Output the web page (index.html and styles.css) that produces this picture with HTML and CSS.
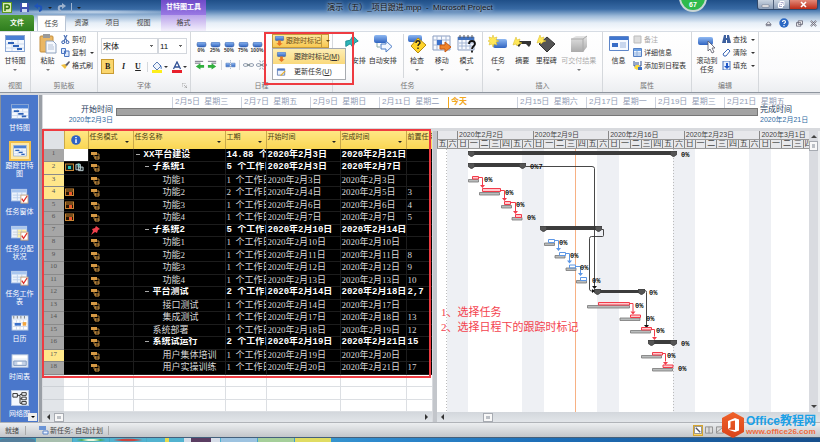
FILE: index.html
```html
<!DOCTYPE html>
<html lang="zh-CN">
<head>
<meta charset="utf-8">
<title>演示（五）_项目跟进.mpp - Microsoft Project</title>
<link rel="stylesheet" href="styles.css">
</head>
<body>
<svg class="defs" aria-hidden="true">
  <defs>
    <linearGradient id="blue" x1="0" y1="0" x2="0" y2="1"><stop offset="0" stop-color="#8fb9f2"/><stop offset="1" stop-color="#2f63c0"/></linearGradient>
    <linearGradient id="grey" x1="0" y1="0" x2="0" y2="1"><stop offset="0" stop-color="#e4e4e4"/><stop offset="1" stop-color="#aaa"/></linearGradient>
    <linearGradient id="orange" x1="0" y1="0" x2="0" y2="1"><stop offset="0" stop-color="#f0622a"/><stop offset="1" stop-color="#d8431a"/></linearGradient>
    <symbol id="i-gantt" viewBox="0 0 20 18"><rect x=".5" y=".5" width="19" height="16" fill="#f4f8fe" stroke="#8aa6d2"/><rect x="1" y="1" width="18" height="4" fill="#4a7fd4"/><path d="M1 9h18M1 13h18M7 5v11M13 5v11" stroke="#c9d8ee" fill="none"/><path d="M3 7h6v2H3zM8 10h6v2H8zM12 13h5v2h-5z" fill="#2d62b8"/></symbol>
    <symbol id="i-form" viewBox="0 0 20 18"><rect x=".5" y="1.500" width="17" height="13" fill="#edf3fc" stroke="#b7cbea"/><path d="M1 2h16v3H1z" fill="#a9c6ef"/><path d="M2 8h14M2 11h14M7 5v9M12 5v9" stroke="#b9cdea"/><rect x="11" y="8" width="8" height="9" fill="#fff" stroke="#c9a27b"/><path d="M12 12l2 3 4-6" fill="none" stroke="#e0342a" stroke-width="1.500"/></symbol>
    <symbol id="i-usage" viewBox="0 0 20 18"><rect x=".5" y="1.500" width="17" height="13" fill="#edf3fc" stroke="#b7cbea"/><path d="M7 5h10v9H7z" fill="#fff3a6"/><path d="M1 2h16v3H1z" fill="#a9c6ef"/><path d="M2 8h14M2 11h14M7 5v9M12 5v9" stroke="#c5cfd8"/><rect x="11" y="8" width="8" height="9" fill="#fff" stroke="#c9a27b"/><path d="M12 12l2 3 4-6" fill="none" stroke="#e0342a" stroke-width="1.500"/></symbol>
    <symbol id="i-cal" viewBox="0 0 20 18"><rect x="1" y="1" width="18" height="16" fill="#fff" stroke="#a9bedd"/><path d="M1 2h18v4H1z" fill="#e4ebf6"/><path d="M3 1v3M7 1v3M11 1v3M15 1v3" stroke="#777"/><path d="M2 9h16M2 13h16M6 6v11M10 6v11M14 6v11" stroke="#cdd8ea"/><path d="M4 9h7v3H4z" fill="#3a70ca"/><path d="M13 8h4v4h-4z" fill="#f4a640"/></symbol>
    <symbol id="i-time" viewBox="0 0 20 18"><rect x="1" y="2" width="18" height="14" fill="#edf2fa" stroke="#b4c5de"/><path d="M2 3h16v3H2z" fill="#fff"/><path d="M3 9h14v5H3z" fill="#c5d3e8" stroke="#7f98bd"/><path d="M7 10h5v3H7z" fill="#fff"/></symbol>
    <symbol id="i-net" viewBox="0 0 20 18"><rect x=".5" y=".5" width="19" height="17" fill="#f3f7fd" stroke="#b9cbe8"/><path d="M2 4h5v4H2zM12 3h5v3h-5zM12 8h5v3h-5zM12 13h5v3h-5zM7 6h3v9h2M10 5h2M10 10h2" fill="none" stroke="#222"/></symbol>
    <symbol id="i-auto" viewBox="0 0 9 9"><path d="M0 1h6v3H0z" fill="#d79a45"/><path d="M3 4v2h2M6 3h2v3" stroke="#a87733" fill="none"/><path d="M4 6h4v2H4z" fill="none" stroke="#d79a45"/></symbol>
    <symbol id="i-pin" viewBox="0 0 9 9"><path d="M5 0l4 3-2 1-1 3-2-1-4 3 2-4-1-2 3-1z" fill="#f0404c"/></symbol>
    <symbol id="i-date" viewBox="0 0 9 9"><rect x=".5" y="1" width="8" height="6.500" fill="#241505" stroke="#c98635"/><path d="M1 3h7" stroke="#c98635"/><path d="M4 4h3v3H4z" fill="#f0562a"/></symbol>
    <symbol id="i-date2" viewBox="0 0 9 9"><rect x=".5" y="1" width="8" height="6.500" fill="#10241f" stroke="#c98635"/><path d="M3 3h3v3H3z" fill="#27c5bb"/></symbol>
    <symbol id="i-note" viewBox="0 0 10 9"><path d="M1 1h5v6H1zM4 4h5v4H4z" fill="#263238" stroke="#c8dadd"/><path d="M3 0h2v4H3z" fill="#7ed0cd"/></symbol>
    <symbol id="i-pill" viewBox="0 0 11 11"><rect x="1" y="0" width="9" height="5" rx="2" fill="url(#blue)" stroke="#2a5299" stroke-width=".5"/></symbol>
    <symbol id="i-track" viewBox="0 0 11 11"><rect x="1" y="0" width="9" height="5" rx="1" fill="url(#blue)" stroke="#2a5299" stroke-width=".5"/><path d="M4 5h3v3h2l-3.500 3L2 8h2z" fill="#e87722"/></symbol>
    <symbol id="i-summary" viewBox="0 0 8 7"><path d="M0 0h8v4L4 7 0 4z" fill="#555" stroke="#222" stroke-width=".6"/></symbol>
    <symbol id="i-chain" viewBox="0 0 12 10"><rect x="0.500" y="3.500" width="5" height="3" rx="1.500" fill="none" stroke="#8996aa"/><rect x="6.500" y="3.500" width="5" height="3" rx="1.500" fill="none" stroke="#8996aa"/><path d="M4 5h4" stroke="#566"/></symbol>
  </defs>
</svg>

<div class="app">
  <header class="head">
    <div class="titlebar">
      <div class="title-left">
        <div class="quick">
          <svg class="logo" viewBox="0 0 10 11"><rect x=".5" y=".5" width="9" height="10" fill="#d9edb4" stroke="#5d9a1f"/><path d="M3 9V3h2.500a1.800 1.800 0 0 1 0 3.600H3" fill="none" stroke="#34750f" stroke-width="1.500"/></svg>
          <button aria-label="保存"><svg viewBox="0 0 9 9"><path d="M0 0h9v9H0z" fill="#3f51b0"/><path d="M2 0h5v4H2z" fill="#fff"/><path d="M2 6h5v3H2z" fill="#ccd6f2"/></svg></button>
          <button aria-label="撤消"><svg viewBox="0 0 9 9"><path d="M2 3h3c3 0 3 4 0 5" fill="none" stroke="#1f54b8" stroke-width="2"/><path d="M0 3l4-3v6z" fill="#1f54b8"/></svg></button>
          <i class="caret"></i>
          <button class="dim" aria-label="恢复"><svg viewBox="0 0 9 9"><path d="M7 3H4C1 3 1 7 4 8" fill="none" stroke="#9db2cd" stroke-width="2"/><path d="M9 3L5 0v6z" fill="#9db2cd"/></svg></button>
          <i class="bar"></i><i class="caret"></i>
        </div>
        <div class="context-title">甘特图工具</div>
      </div>
      <h1>演示（五）_项目跟进.mpp&nbsp; - &nbsp;Microsoft Project</h1>
      <div class="title-right">
        <span class="badge">67</span>
        <div class="win"><button aria-label="最小化"><svg viewBox="0 0 9 7"><path d="M1 4h7v2H1z" fill="#fff" stroke="#667" stroke-width=".5"/></svg></button><button aria-label="还原"><svg viewBox="0 0 9 7"><path d="M3 .5h4v4H3zM1.500 2.500h4v4h-4z" fill="#aac" stroke="#fff"/></svg></button><button class="close" aria-label="关闭"><svg viewBox="0 0 9 7"><path d="M2 1l5 5M7 1L2 6" stroke="#fff" stroke-width="1.600"/></svg></button></div>
      </div>
    </div>
    <nav class="tabs">
      <button class="file">文件</button><button class="tab on">任务</button><button class="tab">资源</button><button class="tab">项目</button><button class="tab">视图</button><button class="tab ctx">格式</button>
      <div class="tabtools">
        <svg viewBox="0 0 8 8"><path d="M1 5l3-3 3 3zM1 6.500h6" fill="#fff" stroke="#667"/></svg>
        <svg class="help" viewBox="0 0 10 10"><circle cx="5" cy="5" r="4.700" fill="#2a68c4"/><path d="M3.500 4c0-2 3-2 3 0 0 1-1.500 1-1.500 2M5 7v1.200" fill="none" stroke="#fff" stroke-width="1.200"/></svg>
        <svg viewBox="0 0 8 8"><path d="M2.500 1h5v4h-5zM.5 3h5v4h-5z" fill="#fff" stroke="#667"/></svg>
        <svg viewBox="0 0 8 8"><path d="M1 1l6 6M7 1L1 7" stroke="#667" stroke-width="2"/><path d="M1 1l6 6M7 1L1 7" stroke="#fff" stroke-width=".7"/></svg>
      </div>
    </nav>
  </header>

  <section class="ribbon">
    <div class="group g-view">
      <div class="body"><button class="big"><svg viewBox="0 0 20 18"><use href="#i-gantt"/></svg><span>甘特图</span><i class="caret"></i></button></div>
      <div class="name">视图</div>
    </div>
    <div class="group g-clip">
      <div class="body">
        <button class="big"><svg viewBox="0 0 18 20"><rect x="1" y="2" width="13" height="16" rx="1" fill="#eab765" stroke="#c58f3c"/><path d="M4 0h7v4H4z" fill="#9a9a9a"/><path d="M7 7h7l3 3v9H7z" fill="#f6f9fe" stroke="#8fa3c0"/><path d="M9 11h5M9 13h6M9 15h6" stroke="#b2c0d6"/></svg><span>粘贴</span><i class="caret"></i></button>
        <div class="stack">
          <button><svg viewBox="0 0 9 9"><path d="M3 0l3 6M6 0L3 6" stroke="#4b6fb4" stroke-width="1.200"/><circle cx="2.200" cy="7.200" r="1.400" fill="none" stroke="#2a56a8"/><circle cx="6.500" cy="7.200" r="1.400" fill="none" stroke="#2a56a8"/></svg>剪切</button>
          <button><svg viewBox="0 0 9 9"><path d="M.5.5h4v5h-4zM3.500 3h4.500v5.500H3.500z" fill="#dfeafb" stroke="#4a74c0"/></svg>复制<i class="caret"></i></button>
          <button><svg viewBox="0 0 9 9"><path d="M0 4l4 4 2-3-2-2z" fill="#f0c040"/><path d="M4 4l4-4 1 1-3 4z" fill="#5a5a6a"/></svg>格式刷</button>
        </div>
      </div>
      <div class="name">剪贴板</div>
    </div>
    <div class="group g-font">
      <div class="body col">
        <div class="row"><select class="fontname" aria-label="字体"><option>宋体</option></select><select class="fontsize" aria-label="字号"><option>11</option></select></div>
        <div class="row fmt"><button class="b on">B</button><button class="i">I</button><button class="u">U</button><i class="vr"></i>
          <button aria-label="填充颜色"><svg viewBox="0 0 10 12"><path d="M1 5l4-4 4 4-4 4z" fill="#eef4fd" stroke="#5b7db5"/><path d="M8 4c2 2 1 4 1 4" stroke="#3a6cc0" fill="none"/><path d="M0 9h10v3H0z" fill="#fdee1c"/></svg></button><i class="caret"></i>
          <button aria-label="字体颜色"><svg viewBox="0 0 10 12"><path d="M1.500 8L5 1l3.500 7M3 6h4" fill="none" stroke="#2f4f94" stroke-width="1.300"/><path d="M0 9h10v3H0z" fill="#e8202c"/></svg></button><i class="caret"></i></div>
      </div>
      <div class="name">字体</div><svg class="launch" viewBox="0 0 5 5"><path d="M0 4V0h4M2 2l3 3M5 2v3H2" fill="none" stroke="#999" stroke-width=".7"/></svg>
    </div>
    <div class="group g-sched">
      <div class="body">
        <div class="col sched">
          <div class="row pct">
            <button><svg><use href="#i-pill"/></svg>0%</button><button><svg><use href="#i-pill"/></svg>25%</button><button><svg><use href="#i-pill"/></svg>50%</button><button><svg><use href="#i-pill"/></svg>75%</button><button><svg><use href="#i-pill"/></svg>100%</button>
          </div>
          <div class="row links">
            <button aria-label="升级"><svg viewBox="0 0 12 10"><path d="M1 1h9M1 3h6" stroke="#667"/><path d="M11 5v3H7v2L2 6.500 7 3v2z" fill="#2fae3c"/></svg></button>
            <button aria-label="降级"><svg viewBox="0 0 12 10"><path d="M1 1h9M5 3h5" stroke="#667"/><path d="M1 5v3h4v2l5-3.500L5 3v2z" fill="#2fae3c"/></svg></button>
            <i class="vr"></i>
            <button aria-label="拆分任务"><svg viewBox="0 0 12 10"><path d="M1 3h4v4H1zM7 3h4v4H7z" fill="url(#blue)" stroke="#4776bd" stroke-width=".6"/><path d="M6 0v10" stroke="#7d93b3" stroke-dasharray="1 1"/></svg></button>
            <i class="vr"></i>
            <button aria-label="链接任务"><svg viewBox="0 0 12 10"><use href="#i-chain"/></svg></button>
            <button aria-label="取消链接"><svg viewBox="0 0 12 10"><use href="#i-chain"/><path d="M4 0l1 2M8 0L7 2M4 10l1-2M8 10L7 8" stroke="#8996aa"/></svg></button>
          </div>
        </div>
        <div class="drop">
          <button class="mark"><svg><use href="#i-track"/></svg><span>跟踪时标记</span><i class="caret"></i></button>
          <div class="menu">
            <button class="hot"><svg><use href="#i-track"/></svg>跟踪时标记(<u>M</u>)</button>
            <button><svg viewBox="0 0 11 11"><path d="M1 2h8v7H1z" fill="#eef3fb" stroke="#6a86b8"/><path d="M1 2h8v2H1z" fill="#4a78c6"/><path d="M4 9l5-5 1 1-5 5z" fill="#e8b02c"/></svg>更新任务(<u>U</u>)</button>
          </div>
          <div class="frame"></div>
        </div>
      </div>
      <div class="name">日程</div>
    </div>
    <div class="group g-task">
      <div class="body">
        <button class="big manual"><svg viewBox="0 0 16 18"><path d="M1 8l5-1 3-5 6 6-4 2-2 5-3-4-5 3z" fill="#2cb5b8" stroke="#188a90"/></svg><span>安排</span></button>
        <button class="big w34"><svg viewBox="0 0 20 18"><rect x="1" y="0" width="13" height="8" rx="2" fill="url(#blue)"/><path d="M4 8v4h3" fill="none" stroke="#8aa"/><path d="M8 9h5V6l6 5.500-6 5.500v-3H8z" fill="#f1f6ff" stroke="#4b7cc6"/></svg><span>自动安排</span></button>
        <i class="vr tall"></i>
        <button class="big w25"><svg viewBox="0 0 20 18"><rect x="1" y="0" width="14" height="7" rx="2" fill="url(#blue)"/><path d="M11 3l8 7-8 8-7-7z" fill="#ffd42a" stroke="#b58a10"/><path d="M9 8c0-3 4-3 4 0 0 1-2 1-2 3M11 12.500v1.500" fill="none" stroke="#222" stroke-width="1.400"/></svg><span>检查</span><i class="caret"></i></button>
        <button class="big w25"><svg viewBox="0 0 20 18"><path d="M1 1h17v14H1z" fill="#f8faff" stroke="#8a9dc0"/><path d="M1 5h17M1 10h17M5 1v14M9.500 1v14M14 1v14" stroke="#a5b6d4"/><path d="M5 5h5v5H5z" fill="#3b71cb"/><path d="M8 10h5V7l6 5-6 5v-3H8z" fill="#f0832a" stroke="#c95b12"/></svg><span>移动</span><i class="caret"></i></button>
        <button class="big w25"><svg viewBox="0 0 20 18"><path d="M1 2h16v13H1z" fill="#f8faff" stroke="#8a9dc0"/><path d="M1 2h16v3H1z" fill="#4273c0"/><path d="M3 0v3M7 0v3M11 0v3M15 0v3" stroke="#555"/><path d="M2 8h14M2 11h14M5 5v9M9 5v9M13 5v9" stroke="#a5b6d4"/><path d="M12 9c0-4 6-4 6 0 0 2-3 2-3 5M15 15.500v2" fill="none" stroke="#111" stroke-width="1.800"/></svg><span>模式</span><i class="caret"></i></button>
      </div>
      <div class="name">任务</div>
    </div>
    <div class="group g-ins">
      <div class="body">
        <button class="big w25"><svg viewBox="0 0 20 18"><rect x="5" y="4" width="14" height="9" rx="2" fill="url(#blue)"/><path d="M5 0l1 3 3-1-1 3 3 1-3 1 1 3-3-1-1 3-1-3-3 1 1-3-2-1 2-1-1-3 3 1z" fill="#ffe85a" stroke="#d8b820" stroke-width=".5"/></svg><span>任务</span><i class="caret"></i></button>
        <button class="big w25"><svg viewBox="0 0 20 18"><path d="M4 6h15v3l-2 3-3-3H9l-2 3-3-3z" fill="#333"/><path d="M4 2l1 3 3-1-1 3 3 1-3 1-2 2-1-2-3 1 1-3z" fill="#ffe85a" stroke="#d8b820" stroke-width=".5"/></svg><span>摘要</span></button>
        <button class="big w25"><svg viewBox="0 0 20 18"><path d="M11 2l8 7-8 8-8-8z" fill="#555" stroke="#333"/><path d="M4 0l1 3 3-1-1 3 3 1-3 1-2 2-1-2-3 1 1-3z" fill="#ffe85a" stroke="#d8b820" stroke-width=".5"/></svg><span>里程碑</span></button>
        <button class="big w42 off" disabled><svg viewBox="0 0 20 18"><path d="M2 4l5-3h11v11l-4 5H2z" fill="url(#grey)"/><path d="M2 4h12v13M14 4l4-3" fill="none" stroke="#aaa"/></svg><span>可交付结果</span><i class="caret"></i></button>
      </div>
      <div class="name">插入</div>
    </div>
    <div class="group g-prop">
      <div class="body">
        <button class="big w25"><svg viewBox="0 0 20 18"><path d="M.5 1.500h19v14H.5z" fill="#f5f9ff" stroke="#5e86c9"/><path d="M1 2h18v3H1z" fill="#4076cf"/><path d="M3 8h6v4H3z" fill="#356bc6"/><path d="M11 8h6M11 10h6M11 12h6" stroke="#9ab3dc"/></svg><span>信息</span></button>
        <div class="stack">
          <button class="off" disabled><svg viewBox="0 0 9 9"><path d="M1 1h7v7H1z" fill="#ddd" stroke="#bbb"/></svg>备注</button>
          <button><svg viewBox="0 0 9 9"><path d="M.5.5h8v8h-8z" fill="#eef5ff" stroke="#5580c4"/><path d="M1 1h7v2H1z" fill="#6ea2e4"/><path d="M1 5h7M1 7h7M4 3v5" stroke="#8fb0de"/></svg>详细信息</button>
          <button><svg viewBox="0 0 9 9"><path d="M1 0v5h7V0M3 1v3M5 1v3" stroke="#2b4f92" fill="none"/><path d="M3 4l3 0 1 3-3 2-3-2z" fill="#fbd93b"/><path d="M5 6h4v3H5z" fill="#3a6fc9"/></svg>添加到日程表</button>
        </div>
      </div>
      <div class="name">属性</div>
    </div>
    <div class="group g-edit">
      <div class="body">
        <button class="big w25"><svg viewBox="0 0 20 18"><rect x="1" y="2" width="15" height="8" rx="2" fill="url(#blue)"/><path d="M11 6v10l2-2 2 4 2-1-2-4h3z" fill="#fff" stroke="#556" stroke-width=".8"/></svg><span>滚动到<br>任务</span></button>
        <div class="stack">
          <button><svg viewBox="0 0 9 9"><path d="M1 4l1-4h2v8H0zM5 0h2l2 8H5zM4 3h1v2H4z" fill="#3c5f9e"/></svg>查找<i class="caret"></i></button>
          <button><svg viewBox="0 0 9 9"><path d="M1 6l5-5 2 2-4 5H2z" fill="#fff" stroke="#3a65b5"/></svg>清除<i class="caret"></i></button>
          <button><svg viewBox="0 0 9 9"><path d="M1 0h7v9H1z" fill="#e8f0fd" stroke="#4a74bd"/><path d="M4 2h2v3h2L5 8 2 5h2z" fill="#2058c8"/></svg>填充<i class="caret"></i></button>
        </div>
      </div>
      <div class="name">编辑</div>
    </div>
  </section>

  <main class="main">
    <aside class="views">
      <button><svg><use href="#i-gantt"/></svg>甘特图</button>
      <button class="on"><svg><use href="#i-gantt"/></svg>跟踪甘特图</button>
      <button><svg><use href="#i-form"/></svg>任务窗体</button>
      <button><svg><use href="#i-usage"/></svg>任务分配状况</button>
      <button><svg><use href="#i-form"/></svg>任务工作表</button>
      <button><svg><use href="#i-cal"/></svg>日历</button>
      <button><svg><use href="#i-time"/></svg>时间表</button>
      <button><svg><use href="#i-net"/></svg>网络图</button>
      <span class="more"><i class="caret"></i></span>
    </aside>

    <div class="work">
      <section class="timeline">
        <div class="edge start"><b>开始时间</b><span>2020年2月3日</span></div>
        <div class="span">
          <div class="dates"><span>2月5日&nbsp; 星期三</span><span>2月7日&nbsp; 星期五</span><span>2月9日&nbsp; 星期日</span><span>2月11日&nbsp; 星期二</span><span class="today">今天</span><span>2月15日&nbsp; 星期六</span><span>2月17日&nbsp; 星期一</span><span>2月19日&nbsp; 星期三</span><span>2月21日&nbsp; 星期五</span></div>
          <div class="track"></div>
        </div>
        <div class="edge"><b>完成时间</b><span>2020年2月21日</span></div>
      </section>

      <div class="split">
        <section class="sheet">
          <div class="grid">
          <table>
            <colgroup><col class="c-id"><col class="c-info"><col class="c-mode"><col class="c-name"><col class="c-dur"><col class="c-start"><col class="c-end"><col class="c-pred"></colgroup>
            <thead><tr><th></th><th class="info"><svg viewBox="0 0 10 10"><circle cx="5" cy="5" r="4.800" fill="#2f62c4"/><path d="M5 2v1.300M5 4.300V8" stroke="#fff" stroke-width="1.500"/></svg></th><th>任务模式<i class="caret"></i></th><th>任务名称<i class="caret"></i></th><th>工期<i class="caret"></i></th><th>开始时间<i class="caret"></i></th><th>完成时间<i class="caret"></i></th><th>前置任务</th></tr></thead>
            <tbody>
              <tr class="sum"><th>1</th><td class="white"></td><td><svg><use href="#i-auto"/></svg></td><td class="l0">XX平台建设</td><td>14.88 个工作日</td><td>2020年2月3日</td><td>2020年2月21日</td><td></td></tr>
              <tr class="sum"><th class="sel">2</th><td class="marks"><svg><use href="#i-date2"/></svg><svg><use href="#i-note"/></svg></td><td><svg><use href="#i-auto"/></svg></td><td class="l1">子系统1</td><td>5 个工作日</td><td>2020年2月3日</td><td>2020年2月7日</td><td></td></tr>
              <tr><th class="sel">3</th><td></td><td><svg><use href="#i-auto"/></svg></td><td class="l2">功能1</td><td>1  个工作日</td><td>2020年2月3日</td><td>2020年2月3日</td><td></td></tr>
              <tr><th class="sel">4</th><td class="marks"><svg><use href="#i-date"/></svg></td><td><svg><use href="#i-auto"/></svg></td><td class="l2">功能2</td><td>2  个工作日</td><td>2020年2月4日</td><td>2020年2月5日</td><td>3</td></tr>
              <tr><th>5</th><td class="marks"><svg><use href="#i-date"/></svg></td><td><svg><use href="#i-auto"/></svg></td><td class="l2">功能3</td><td>1  个工作日</td><td>2020年2月6日</td><td>2020年2月6日</td><td>4</td></tr>
              <tr><th>6</th><td class="marks"><svg><use href="#i-date"/></svg></td><td><svg><use href="#i-auto"/></svg></td><td class="l2">功能4</td><td>1  个工作日</td><td>2020年2月7日</td><td>2020年2月7日</td><td>5</td></tr>
              <tr class="sum"><th>7</th><td></td><td><svg><use href="#i-pin"/></svg></td><td class="l1">子系统2</td><td>5 个工作日</td><td>2020年2月10日</td><td>2020年2月14日</td><td></td></tr>
              <tr><th>8</th><td></td><td><svg><use href="#i-auto"/></svg></td><td class="l2">功能1</td><td>1  个工作日</td><td>2020年2月10日</td><td>2020年2月10日</td><td></td></tr>
              <tr><th>9</th><td></td><td><svg><use href="#i-auto"/></svg></td><td class="l2">功能2</td><td>1  个工作日</td><td>2020年2月11日</td><td>2020年2月11日</td><td>8</td></tr>
              <tr><th>10</th><td></td><td><svg><use href="#i-auto"/></svg></td><td class="l2">功能3</td><td>1  个工作日</td><td>2020年2月12日</td><td>2020年2月12日</td><td>9</td></tr>
              <tr><th>11</th><td></td><td><svg><use href="#i-auto"/></svg></td><td class="l2">功能4</td><td>1  个工作日</td><td>2020年2月13日</td><td>2020年2月13日</td><td>10</td></tr>
              <tr class="sum"><th>12</th><td></td><td><svg><use href="#i-auto"/></svg></td><td class="l1">平台测试</td><td>2 个工作日</td><td>2020年2月14日</td><td>2020年2月18日</td><td>2,7</td></tr>
              <tr><th>13</th><td></td><td><svg><use href="#i-auto"/></svg></td><td class="l2">接口测试</td><td>1  个工作日</td><td>2020年2月14日</td><td>2020年2月17日</td><td></td></tr>
              <tr><th>14</th><td></td><td><svg><use href="#i-auto"/></svg></td><td class="l2">集成测试</td><td>1  个工作日</td><td>2020年2月17日</td><td>2020年2月18日</td><td>13</td></tr>
              <tr><th>15</th><td></td><td><svg><use href="#i-auto"/></svg></td><td class="l1 leaf">系统部署</td><td>1  个工作日</td><td>2020年2月18日</td><td>2020年2月19日</td><td>12</td></tr>
              <tr class="sum"><th>16</th><td></td><td><svg><use href="#i-auto"/></svg></td><td class="l1">系统试运行</td><td>2 个工作日</td><td>2020年2月19日</td><td>2020年2月21日</td><td>15</td></tr>
              <tr><th class="sel">17</th><td></td><td><svg><use href="#i-auto"/></svg></td><td class="l2">用户集体培训</td><td>1  个工作日</td><td>2020年2月19日</td><td>2020年2月20日</td><td></td></tr>
              <tr><th>18</th><td></td><td><svg><use href="#i-auto"/></svg></td><td class="l2">用户实操训练</td><td>1  个工作日</td><td>2020年2月20日</td><td>2020年2月21日</td><td>17</td></tr>
              <tr class="blank"><th></th><td></td><td></td><td></td><td></td><td></td><td></td><td></td></tr>
              <tr class="blank"><th></th><td></td><td></td><td></td><td></td><td></td><td></td><td></td></tr>
              <tr class="blank"><th></th><td></td><td></td><td></td><td></td><td></td><td></td><td></td></tr>
            </tbody>
          </table>
          </div>
          <div class="hscroll"><i class="left"></i><i class="thumb"></i><i class="right"></i></div>
          <div class="frame"></div>
        </section>

        <section class="chart">
          <div class="plot">
            <div class="canvas">
              <div class="scale">
                <div class="lead"><b></b><span>五</span><span>六</span></div>
                <div class="week"><b>2020年2月2日</b><span>日</span><span>一</span><span>二</span><span>三</span><span>四</span><span>五</span><span>六</span></div>
                <div class="week"><b>2020年2月9日</b><span>日</span><span>一</span><span>二</span><span>三</span><span>四</span><span>五</span><span>六</span></div>
                <div class="week"><b>2020年2月16日</b><span>日</span><span>一</span><span>二</span><span>三</span><span>四</span><span>五</span><span>六</span></div>
                <div class="week"><b>2020年2月23日</b><span>日</span><span>一</span><span>二</span><span>三</span><span>四</span><span>五</span><span>六</span></div>
                <div class="week"><b>2020年3月1日</b><span>日</span><span>一</span><span>二</span><span>三</span><span>四</span><span>五</span><span>六</span></div>
              </div>
              <svg class="bars" width="398" height="264" viewBox="437 149 398 264">
                <g fill="#eef0f4"><path d="M447 149h21v264h-21zM522 149h22v264h-22zM597 149h22v264h-22zM673 149h22v264h-22zM749 149h22v264h-22z"/></g>
                <path d="M446.500 149v264M673.500 149v264" stroke="#bbb" stroke-dasharray="1 2"/>
                <path d="M575 149h1v264h-1z" fill="#f7b184"/>
                <g fill="#3c3c3c"><path d="M470 151h204v4H470zM470 163h54v4h-54zM542 226h58v4h-58zM595 290h47v3h-47zM650 340h25v4h-25z"/></g>
                <g>
                  <use href="#i-summary" x="468" y="151" width="7" height="6"/><use href="#i-summary" x="670" y="151" width="7" height="6"/>
                  <use href="#i-summary" x="468" y="163" width="7" height="6"/><use href="#i-summary" x="519" y="163" width="7" height="6"/>
                  <use href="#i-summary" x="540" y="226" width="7" height="6"/><use href="#i-summary" x="595" y="226" width="7" height="6"/>
                  <use href="#i-summary" x="594" y="289" width="7" height="6"/><use href="#i-summary" x="638" y="289" width="7" height="6"/>
                  <use href="#i-summary" x="648" y="340" width="7" height="6"/><use href="#i-summary" x="670" y="340" width="7" height="6"/>
                </g>
                <path d="M526 166.500h66q2.500 0 2.500 2V288M602 229.500h1.500v6q0 1-1 1h-11q-2 0-2 2V289q0 2 2 2h2M645 290.500q1.500 0 1.500 2V325" fill="none" stroke="#333" stroke-width=".9"/>
                <path d="M592 286h5l-2.500 3zM592 289v4l3-2zM644 325h5l-2.500 3z" fill="#111"/>
                <g fill="#b9bcbc" stroke="#777" stroke-width=".8"><path d="M468.500 179.500h10v2.500h-10zM479.500 192.500h20v2.500h-20zM501.500 205.500h10v2.500h-10zM512 217.500h10v2.500h-10zM544.500 243h10v2.500h-10zM555 255.500h10v2.500h-10zM566 268h10v2.500h-10zM576.500 280.500h10v2.500h-10zM587.500 305.500h42v2.500h-42zM620 318h20v2.500h-20zM630.500 330.500h20v2.500h-20zM641.500 355.500h20v2.500h-20zM652.500 368.500h20v2.500h-20z"/></g>
                <g fill="#ffc9cd" stroke="#f23b4a"><path d="M472.500 176.500h6v2.500h-6zM482.500 188.500h18v3h-18zM504.500 201.500h6v3h-6zM515.500 214.500h6v3h-6zM598.500 302.500h31v2.500h-31zM630.500 315h10v2.500h-10zM641.500 327.500h10v2.500h-10zM652.500 352.500h10v2.500h-10zM663 365h10v2.500h-10z"/></g>
                <path d="M479 177.500h3.500v9M500 190.500h4.500v8M511 202.500h4.500v9M630 303.500h3v8M651 329.500h3.500v7M662 353.500h3.500v8" fill="none" stroke="#f23b4a"/>
                <path d="M480 185h5l-2.500 3zM502 198h5l-2.500 3zM513 211h5l-2.500 3zM630.500 311.500h5l-2.500 3zM652 337h5l-2.500 3zM663 362h5l-2.500 3z" fill="#f23b4a"/>
                <path d="M548.500 239.500h6v3h-6zM559.500 252.500h6v3h-6zM569.500 265h6v3h-6zM580.500 277.500h6v3h-6zM555 240.500h3.500v9M566 253.500h3.500v8M576 266.500h4.500v8" fill="none" stroke="#5d97e6"/>
                <path d="M556 248h5l-2.500 3zM567 260.500h5l-2.500 3zM578 273h5l-2.500 3z" fill="#5d97e6"/>
                <g class="pc"><text x="681" y="157">0%</text><text x="530" y="169">0%7</text><text x="484" y="182">0%</text><text x="505" y="195">0%</text><text x="516" y="207">0%</text><text x="527" y="220">0%</text><text x="559" y="245">0%</text><text x="570" y="258">0%</text><text x="580" y="270">0%</text><text x="592" y="283">0%</text><text x="649" y="295">0%</text><text x="635" y="308">0%</text><text x="646" y="321">0%</text><text x="656" y="333">0%</text><text x="681" y="346">0%</text><text x="667" y="358">0%</text><text x="678" y="371">0%</text></g>
                <g class="tip"><text x="441" y="316">1、选择任务</text><text x="441" y="331">2、选择日程下的跟踪时标记</text></g>
              </svg>
            </div>
            <div class="vscroll"><i class="up"></i><i class="thumb"></i><i class="down"></i></div>
          </div>
          <div class="hscroll"><i class="left"></i><i class="thumb far"></i></div>
        </section>
      </div>
    </div>
  </main>

  <footer class="status">
    <span class="ready">就绪</span>
    <span class="newtask"><svg viewBox="0 0 10 9"><path d="M0 0h7v4H0z" fill="#6b94d6"/><path d="M4 5h5v3H4z" fill="#eaf2ff" stroke="#5a84c8"/></svg>新任务: 自动计划</span>
    <div class="modes"><button class="on" aria-label="甘特图视图"><svg viewBox="0 0 9 9"><path d="M.5.5h8v8h-8z" fill="#fff" stroke="#888"/><path d="M2 2l5 5" stroke="#556" stroke-width="1.500"/></svg></button><button aria-label="任务分配"><svg viewBox="0 0 9 9"><path d="M.5 1h8v7h-8zM4.500 1v7" fill="#ddd" stroke="#888"/></svg></button><button aria-label="工作组"><svg viewBox="0 0 9 9"><path d="M.5 1h8v7h-8zM1 7l6-5" fill="#ddd" stroke="#888"/></svg></button></div>
  </footer>
  <div class="taskbar"><i class="orb"></i><i class="t a"></i><i class="t g"></i><i class="t r"></i><i class="t y"></i><i class="t w"></i><i class="t b"></i><i class="t n"></i><i class="t h"></i></div>

  <div class="mark-logo">
    <svg viewBox="0 0 22 26"><path d="M11 0l11 6v14l-11 6-11-6V6z" fill="url(#orange)"/><path d="M6 9l7-3 4 1.500v11L13 20l-7-2.500 7 .5V8.500L8.500 9.600v6L6 17z" fill="#fff"/></svg>
    <div><b>Office教程网</b><span>www.office26.com</span></div>
  </div>
</div>
</body>
</html>
```
FILE: styles.css
```css
* { box-sizing: border-box; }
body { margin: 0; font: 7px/9px "Liberation Sans", "Noto Sans CJK SC", sans-serif; color: #333; }
button, select { font: inherit; color: inherit; background: none; border: 0; padding: 0; margin: 0; white-space: nowrap; }
svg { display: block; flex: none; }
i { font-style: normal; }
.defs { position: absolute; width: 0; height: 0; }
.caret { display: inline-block; border: 2px solid transparent; border-top-color: currentColor; border-bottom: 0; width: 4px; height: 2px; flex: none; }
.app { position: relative; display: flex; flex-direction: column; height: 100vh; overflow: hidden; background: #d8dade; }

.head { background: radial-gradient(ellipse at 90px 12px, rgba(225, 236, 248, .8), transparent 100px), linear-gradient(#1f4f88, #396ba5 9px, #9dbad9 16px, #e6eef7 23px, #fcfdff 31px); }
.titlebar { display: grid; grid-template-columns: 1fr auto 1fr; height: 15px; }
.title-left { display: flex; }
.quick { display: flex; align-items: center; gap: 5px; width: 161px; padding-left: 2px; color: #222; }
.quick svg { width: 9px; height: 9px; }
.quick .logo { width: 10px; height: 11px; margin-right: 3px; }
.quick .bar { width: 1px; height: 9px; background: #9fb4d0; }
.context-title { width: 45px; background: linear-gradient(#6e4ac8, #9a79e4); color: #fff; font-size: 7px; font-weight: bold; line-height: 14px; text-align: center; white-space: nowrap; }
h1 { margin: 0; font-size: 8px; line-height: 15px; font-weight: normal; color: #111; text-shadow: 0 0 3px rgba(255, 255, 255, .7), 0 0 5px rgba(255, 255, 255, .6); }
.title-right { position: relative; display: flex; justify-content: flex-end; }
.badge { position: absolute; right: 113px; top: -16px; width: 28px; height: 28px; border-radius: 50%; border: 2px solid #c9d6d6; background: #2fba4c; color: #fff; font-weight: bold; font-size: 7px; line-height: 9px; padding-top: 14px; text-align: center; }
.win { display: flex; height: 10px; margin-right: 2px; border: 1px solid #30486a; border-top: 0; border-radius: 0 0 3px 3px; overflow: hidden; }
.win button { width: 16px; display: grid; place-items: center; background: linear-gradient(#c9d3e0, #8d9fb8); border-right: 1px solid #50607a; }
.win .close { width: 27px; background: linear-gradient(#e38a79, #bd2b18); border: 0; }
.win svg { width: 9px; height: 7px; }
.tabs { display: flex; height: 16px; line-height: 16px; color: #444; }
.tabs button { width: 31px; text-align: center; }
.tabs .file { width: 34px; margin-right: 3px; background: linear-gradient(#4f9c35, #2e7d1e); color: #fff; border-radius: 0 2px 0 0; font-weight: bold; }
.tabs .on { width: 29px; background: #fff; border: 1px solid #b8c4d4; border-bottom: 0; border-radius: 2px 2px 0 0; line-height: 15px; }
.tabs .ctx { width: 45px; margin-left: 2px; background: linear-gradient(#b9a2ea, #f3effc); }
.tabtools { display: flex; align-items: center; gap: 7px; margin-left: auto; padding-right: 3px; }
.tabtools svg { width: 7px; height: 7px; }
.tabtools .help { width: 10px; height: 10px; }

.ribbon { display: flex; height: 62px; background: linear-gradient(#fff, #fbfbfc 40px, #eceef1); border-top: 1px solid #d6dce4; border-bottom: 1px solid #8f969f; flex: none; }
.group { position: relative; display: flex; flex-direction: column; border-right: 1px solid #d5d8dc; padding: 2px 3px 0; }
.group .body { display: flex; flex: 1; }
.group .name { text-align: center; color: #777; line-height: 13px; }
.col { display: flex; flex-direction: column; }
.row { display: flex; align-items: center; }
.g-view { width: 31px; }
.g-clip { width: 67px; }
.g-font { width: 93px; }
.g-sched { width: 142px; }
.g-task { width: 150px; }
.g-ins { width: 120px; }
.g-prop { width: 89px; }
.g-edit { width: 67px; }
.big { display: flex; flex-direction: column; align-items: center; justify-content: flex-start; width: 25px; }
.big svg { width: 20px; height: 20px; margin-bottom: 2px; }
.big .caret { margin-top: 4px; color: #777; }
.g-clip .big { width: 28px; }
.w34 { width: 34px; }
.w42 { width: 42px; }
.off { color: #aaa; }
.big.manual { width: 30px; align-items: flex-end; }
.manual svg { width: 16px; height: 16px; margin: 0 6px 6px 0; }
.vr { width: 1px; height: 10px; background: #d5d8dc; margin: 0 3px; }
.vr.tall { height: 44px; margin: 0 1px 0 3px; }
.stack { display: flex; flex-direction: column; gap: 4px; padding-top: 1px; }
.stack button { display: flex; align-items: center; gap: 2px; height: 9px; }
.stack svg { width: 9px; height: 9px; }
.stack .caret { margin-left: 2px; }
.g-prop .stack { padding-left: 2px; }
.g-edit .stack { padding-left: 3px; }
.fontname, .fontsize { height: 16px; border: 1px solid #d3d7dd; padding-left: 1px; appearance: none; color: #111; font-size: 8px; background: linear-gradient(45deg, transparent 50%, #666 50%) right 5px center / 2px 2px no-repeat, linear-gradient(-45deg, transparent 50%, #666 50%) right 3px center / 2px 2px no-repeat, #fff; }
.fontname { width: 57px; }
.fontsize { width: 29px; }
.g-font .body { padding-top: 4px; gap: 5px; }
.fmt { gap: 4px; }
.fmt button { width: 11px; height: 15px; font: bold 8px/15px "Liberation Serif", serif; color: #222; display: grid; place-items: center; }
.fmt .on { width: 14px; background: #fbd66e; border: 1px solid #c99c33; line-height: 12px; }
.fmt .i { font-style: italic; }
.fmt .u { text-decoration: underline; }
.fmt svg { width: 10px; height: 12px; }
.fmt .vr { margin: 0; }
.fmt .caret { margin-left: -3px; }
.launch { position: absolute; right: 3px; bottom: 4px; width: 5px; height: 5px; }
.g-sched .body { gap: 5px; }
.sched { padding-top: 6px; gap: 5px; width: 74px; }
.pct button { width: 14px; display: flex; flex-direction: column; align-items: center; font-size: 5px; line-height: 5px; font-weight: bold; }
.pct svg { width: 11px; height: 11px; margin-bottom: -5px; }
.pct { height: 14px; }
.links { height: 12px; gap: 2px; }
.links svg { width: 11px; height: 10px; }
.links .vr { margin: 0 1px; }
.drop { position: relative; }
.mark { display: flex; align-items: center; height: 14px; width: 57px; border: 1px solid #c59a3a; background: linear-gradient(#fde79b, #f8c851); color: #6b4b12; gap: 1px; padding-left: 1px; }
.mark svg, .menu svg { width: 11px; height: 10px; }
.mark .caret { margin-left: 3px; }
.mark span { border-right: 1px solid #c59a3a; line-height: 12px; }
.menu { position: absolute; z-index: 3; top: 14px; left: 0; width: 74px; background: #fff; border: 1px solid #a7abb0; }
.menu button { display: flex; align-items: center; width: 100%; height: 15px; padding-left: 3px; }
.menu svg { margin-right: 7px; }
.menu .hot { background: linear-gradient(#fdeeb5, #fad97b); }
.frame { position: absolute; pointer-events: none; border: 2px solid #ee3b41; z-index: 4; }
.drop .frame { left: -8px; top: -2px; width: 90px; height: 53px; }

.main { display: flex; flex: 1; min-height: 0; padding-top: 2px; }
.views { position: relative; width: 38px; margin-right: 1px; padding: 9px 4px 4px; background: #4a77cb; border-left: 1px solid #8a929c; color: #fff; display: flex; flex-direction: column; justify-content: space-between; overflow: hidden; }
.views button { display: flex; flex-direction: column; align-items: center; white-space: normal; line-height: 8px; gap: 4px; }
.views svg { width: 18px; height: 16px; }
.views .on { gap: 1px; }
.views .on svg { width: 22px; height: 20px; padding: 2px; border: 2px solid #f2c04c; background: #fde9a9; }
.more { position: absolute; right: 1px; bottom: 1px; width: 9px; height: 8px; background: #eee; color: #000; display: grid; place-items: center; }
.work { flex: 1; min-width: 0; display: flex; flex-direction: column; border-left: 3px solid #9a9fa6; padding-left: 1px; }
.timeline { display: grid; grid-template-columns: 73px 1fr 62px; height: 33px; background: #fff; flex: none; }
.edge { padding: 10px 0 0 2px; display: flex; flex-direction: column; white-space: nowrap; color: #2f6a9f; }
.edge b { font-weight: normal; font-size: 8px; line-height: 10px; color: #1d3c5c; }
.edge.start { align-items: flex-end; padding-right: 3px; }
.dates { display: grid; grid-auto-flow: column; grid-auto-columns: 69px; justify-content: start; margin-left: 56px; padding-top: 2px; height: 13px; }
.dates span { font-size: 8px; line-height: 9px; color: #929db5; border-left: 1px solid #ccd2de; padding-left: 2px; white-space: nowrap; }
.dates .today { color: #f2a81d; font-weight: bold; border-color: #f2a81d; }
.span { min-width: 0; }
.track { height: 8px; background: #a3a3a3; border: 1px solid #777; }

.split { display: flex; flex: 1; min-height: 0; padding-top: 3px; }
.sheet { position: relative; width: 389px; display: flex; flex-direction: column; flex: none; }
.grid { flex: 1; min-height: 0; overflow: hidden; }
table { width: 100%; height: 100%; table-layout: fixed; border-collapse: collapse; }
.c-id { width: 21px; } .c-info { width: 24px; } .c-mode { width: 45px; } .c-name { width: 92px; }
.c-dur { width: 41px; } .c-start { width: 74px; } .c-end { width: 66px; } .c-pred { width: 26px; }
th, td { padding: 0; overflow: hidden; white-space: pre; text-align: left; }
thead th { position: relative; height: 18px; background: linear-gradient(#ffe685, #f9d653); border-right: 1px solid #c9a94a; font-weight: normal; color: #4a3c14; padding-left: 1px; vertical-align: top; line-height: 11px; }
thead th:first-child { background: #dfe2e6; }
thead th .caret { position: absolute; right: 4px; bottom: 6px; color: #222; }
thead .info { padding: 4px 0 0 6px; }
.info svg { width: 10px; height: 10px; }
tbody tr { height: 12px; }
tbody td { background: #000; color: #d8d8d8; border: 1px solid #1d1d1d; border-width: 0 1px 1px 0; font: 9px/11px "Liberation Serif", "Noto Sans CJK SC", serif; padding-left: 1px; }
tbody .sum td { font: bold 9px/11px "Liberation Mono", "Noto Sans CJK SC", monospace; color: #fff; }
tbody th { background: #a6a6a6; color: #555; border-bottom: 1px solid #8a8a8a; text-align: center; font: 7px/9px "Liberation Serif", serif; vertical-align: top; }
tbody .sel { background: #ffe78a; }
tbody td:nth-child(3) { padding-left: 2px; }
td svg { width: 9px; height: 9px; }
.marks svg { float: left; margin-right: 1px; }
tbody .white { background: #fff; }
.l0::before, .l1::before { content: ""; display: inline-block; width: 4px; height: 1px; background: #aaa; vertical-align: middle; margin-right: 4px; }
tbody .l0 { padding-left: 2px; }
tbody .l1 { padding-left: 11px; }
tbody .leaf { padding-left: 19px; }
.leaf::before { display: none; }
tbody .l2 { padding-left: 29px; }
tbody .blank td { background: #fff; border-color: #dcdfe3; }
tbody .blank th { background: #e2e5e9; border-color: #cdd1d6; }
.sheet .frame { left: -1px; top: -2px; right: 1px; bottom: 44px; }

.hscroll { display: flex; align-items: center; height: 10px; padding: 0 4px; background: linear-gradient(#d3d7dc, #e2e5e9); flex: none; }
.hscroll .left { border: 3px solid transparent; border-right-color: #333; border-left: 0; }
.hscroll .right { border: 3px solid transparent; border-left-color: #333; border-right: 0; margin-left: auto; }
.thumb { width: 10px; height: 9px; margin-left: 4px; border: 1px solid #a7abb2; background: #f1f2f4; box-shadow: inset 0 0 0 2px #f8f8f8, inset 0 0 0 9px #bcc0c6; }
.thumb.far { margin-left: 39px; }
.chart { flex: 1; min-width: 0; display: flex; flex-direction: column; border-left: 4px solid #c3c6cb; margin-left: 1px; }
.plot { display: flex; flex: 1; min-height: 0; }
.canvas { flex: 1; min-width: 0; overflow: hidden; background: #fff; }
.scale { display: grid; grid-template-columns: 20px repeat(5, 1fr); width: 398px; background: #e7e8eb; color: #444; font-size: 8px; line-height: 8px; }
.week, .lead { display: grid; grid-template-columns: repeat(7, 1fr); border-bottom: 1px solid #999; }
.lead { grid-template-columns: repeat(2, 1fr); }
.scale b { grid-column: 1 / -1; height: 9px; font-size: 7px; font-weight: normal; border-bottom: 1px solid #999; border-left: 1px solid #888; padding-left: 1px; white-space: nowrap; }
.scale span { border-left: 1px solid #888; height: 8px; overflow: hidden; text-align: center; }
.pc { font: bold 7px "Liberation Mono", monospace; fill: #111; }
.tip { font: 11px "Liberation Serif", "Noto Sans CJK SC", serif; fill: #f4424e; }
.vscroll { width: 11px; display: flex; flex-direction: column; align-items: center; background: #d9dbe0; border-right: 2px solid #eceef0; padding: 4px 0; }
.vscroll .up { border: 3px solid transparent; border-bottom-color: #444; border-top: 0; }
.vscroll .down { border: 3px solid transparent; border-top-color: #444; border-bottom: 0; margin-top: auto; }
.vscroll .thumb { margin: 3px 0 0; width: 9px; height: 10px; }

.status { display: flex; align-items: center; height: 15px; background: linear-gradient(#eceef0, #c3c6ca); border-top: 1px solid #b0b3b8; color: #444; flex: none; }
.ready { width: 26px; padding-left: 5px; border-right: 1px solid #aaa; margin-right: 13px; }
.newtask { display: flex; gap: 1px; padding-right: 5px; border-right: 1px solid #aaa; font-size: 7px; }
.newtask svg { width: 10px; height: 9px; }
.modes { display: flex; gap: 1px; margin-left: auto; margin-right: 95px; }
.modes button { width: 10px; height: 11px; display: grid; place-items: center; }
.modes .on { background: #fbd66e; border: 1px solid #d6a52e; }
.modes svg { width: 8px; height: 8px; }
.taskbar { display: flex; align-items: flex-end; gap: 1px; height: 5px; background: linear-gradient(90deg, #3c9ab8, #4fb4cf 25%, #2f8bce 45%, #1e6fb8 66%, #174f8c); border-top: 1px solid #44607c; flex: none; }
.taskbar i { height: 4px; width: 36px; background: #77bcd4; }
.taskbar .orb { width: 35px; background: #557f9c; border-radius: 50% 50% 0 0; }
.taskbar .a { background: #a7bfae; }
.taskbar .g { background: radial-gradient(#e8f5e0 20%, #4fae5c 40%, #52b3d0 60%); }
.taskbar .r { background: radial-gradient(#c94540 30%, #52b3d0 60%); }
.taskbar .y { background: linear-gradient(90deg, #52b3d0 50%, #e6dd50 50% 60%, #52b3d0 60%); }
.taskbar .w { background: linear-gradient(90deg, #d6dde8 20%, #5a3d62 20% 75%, #d6dde8 75%); }
.taskbar .b { background: #9dc3e0; }
.taskbar .n { background: #a5cf9a; }
.taskbar .h { background: #e0dc62; }
.mark-logo { position: absolute; right: 4px; bottom: 4px; display: flex; gap: 2px; z-index: 5; align-items: center; }
.mark-logo svg { width: 22px; height: 26px; }
.mark-logo div { display: flex; flex-direction: column; width: 70px; white-space: nowrap; }
.mark-logo b { font-size: 12px; line-height: 12px; color: #1ba0e6; }
.mark-logo span { font-size: 8px; line-height: 9px; font-weight: bold; color: #ee6a3c; }
```
